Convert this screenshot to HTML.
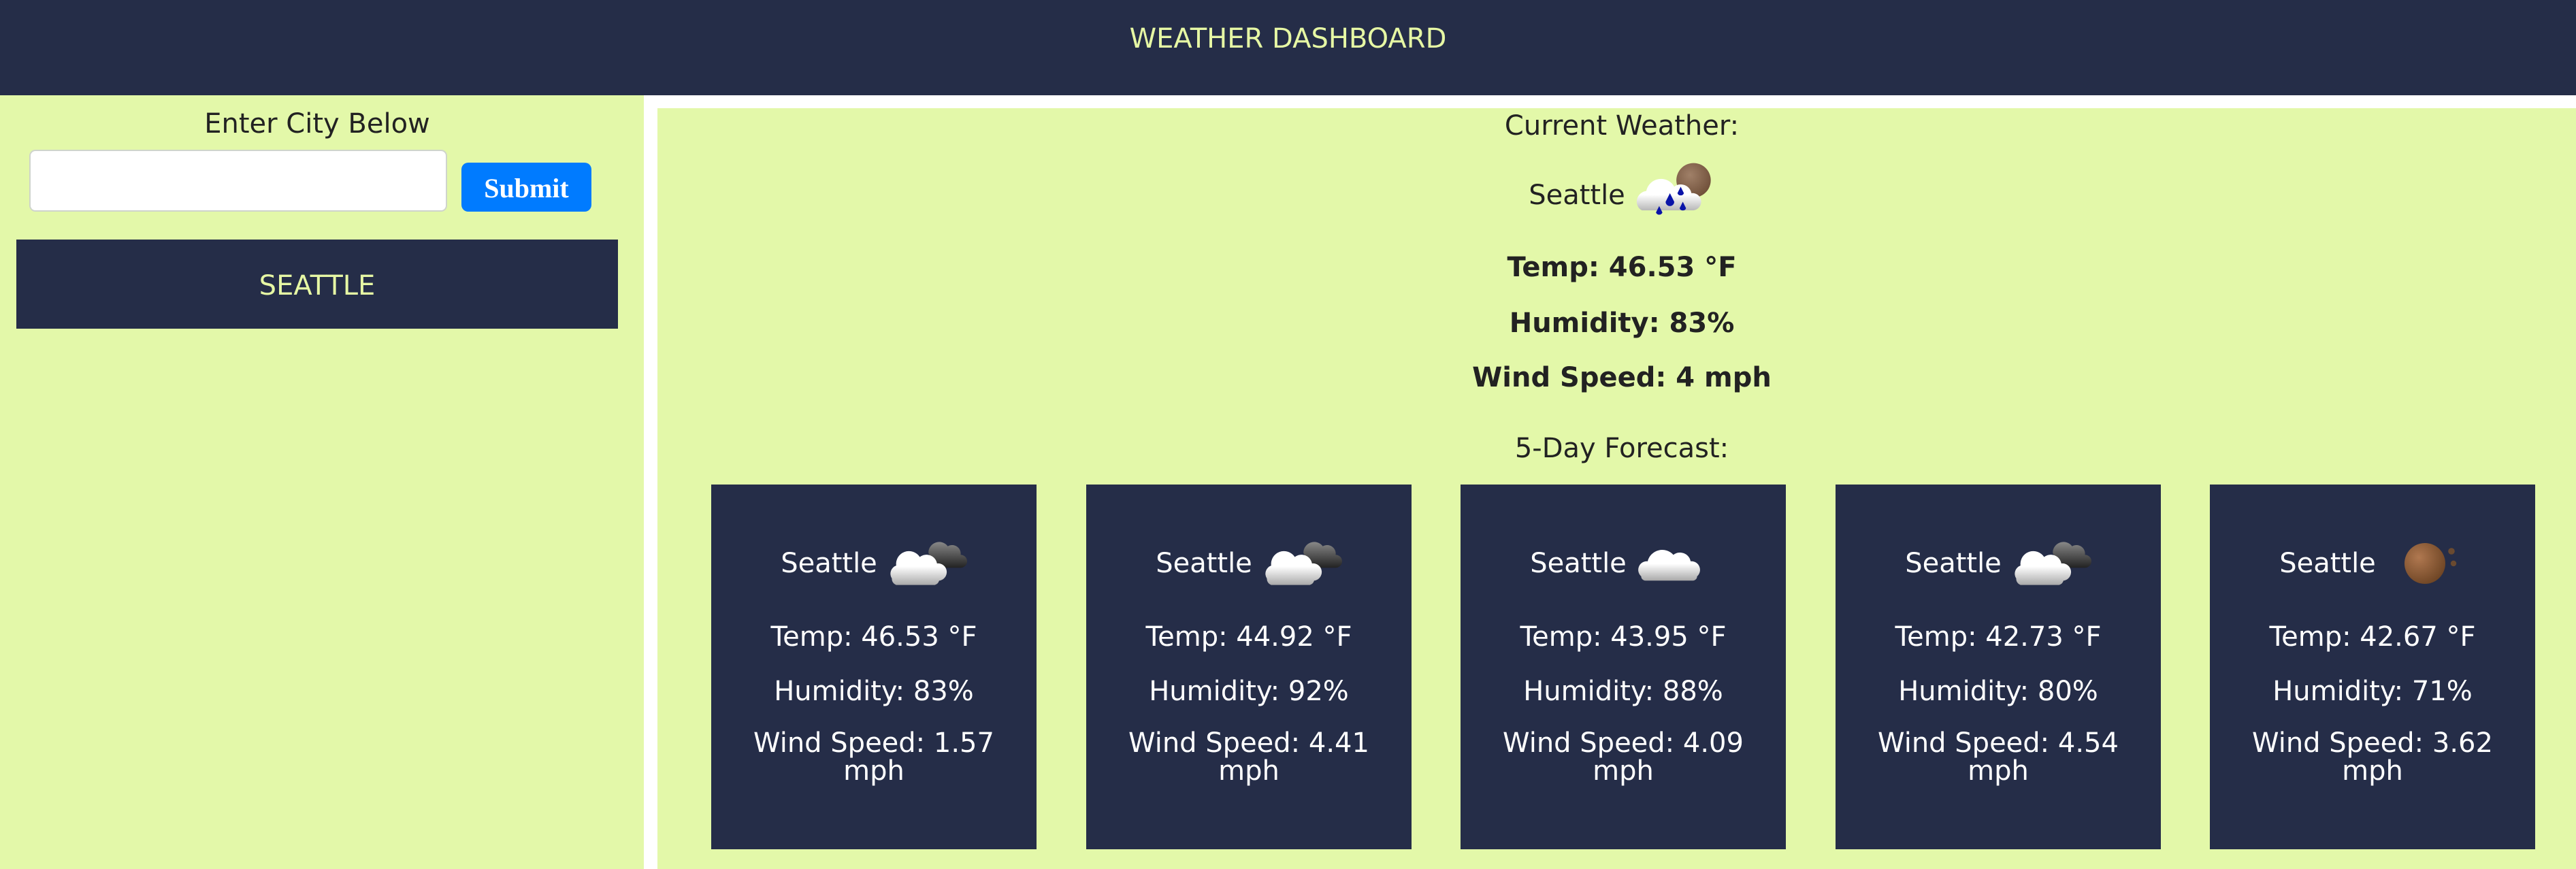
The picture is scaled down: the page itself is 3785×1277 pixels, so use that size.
<!DOCTYPE html>
<html><head><meta charset="utf-8"><style>
*{margin:0;padding:0;box-sizing:border-box}
body{width:3785px;height:1277px;position:relative;background:#fff;font-family:"DejaVu Sans","Liberation Sans",sans-serif;font-size:40px;color:#222;overflow:hidden}
.abs{position:absolute}
.hdr{left:0;top:0;width:3785px;height:140px;background:#252d48}
.c{position:absolute;text-align:center;line-height:48px;white-space:nowrap}
.green{background:#e3f8a9}
.card{position:absolute;top:712px;width:478px;height:536px;background:#252d48;color:#fff}
.card .c{left:0;width:478px}
.row{display:flex;justify-content:center;align-items:center}
.row svg{margin-left:12px}
</style></head><body>
<div class="abs hdr"></div>
<div class="c" style="left:0;width:3785px;top:33px;color:#e6f7a4">WEATHER DASHBOARD</div>

<div class="abs green" style="left:0;top:140px;width:946px;height:1137px"></div>
<div class="abs green" style="left:966px;top:159px;width:2819px;height:1118px"></div>

<div class="c" style="left:0;width:932px;top:158px">Enter City Below</div>
<div class="abs" style="left:43px;top:220px;width:614px;height:91px;background:#fff;border:2px solid #cfd4cc;border-radius:9px"></div>
<div class="abs" style="left:678px;top:239px;width:191px;height:72px;background:#007bff;border-radius:10px;color:#fff;font-family:'Liberation Serif',serif;font-weight:bold;font-size:40px;line-height:76px;text-align:center">Submit</div>
<div class="abs" style="left:24px;top:352px;width:884px;height:131px;background:#252d48"></div>
<div class="c" style="left:24px;width:884px;top:396px;color:#e6f7a4">SEATTLE</div>

<div class="c" style="left:966px;width:2834px;top:161px">Current Weather:</div>
<div class="c row" style="left:966px;width:2834px;top:227px;height:120px">
<span>Seattle</span>
<svg width="120" height="120" viewBox="4 7 38 38">
<defs><radialGradient id="mn" cx="0.4" cy="0.35" r="0.7"><stop offset="0" stop-color="#a08068"/><stop offset="1" stop-color="#6e4e38"/></radialGradient>
<linearGradient id="wc" x1="0" y1="0" x2="0" y2="1"><stop offset="0.5" stop-color="#fff"/><stop offset="1" stop-color="#b8b8b8"/></linearGradient></defs>
<circle cx="32" cy="19" r="8" fill="url(#mn)"/>
<path d="M6 31 a5 5 0 0 1 4-7 a7 7 0 0 1 13-2 a5 5 0 0 1 8 3 a4 4 0 0 1 1 8 h-24 a4 4 0 0 1-2-2z" fill="url(#wc)"/>
<path d="M21 25 l-2 4 a2 2 0 0 0 4 0z M26 22 l-1.5 3 a1.6 1.6 0 0 0 3 0z M27 29 l-1.5 3 a1.6 1.6 0 0 0 3 0z M16 31 l-1.5 3 a1.6 1.6 0 0 0 3 0z" fill="#0a14a8"/>
</svg></div>
<div class="c" style="left:966px;width:2834px;top:369px;font-weight:bold">Temp: 46.53 °F</div>
<div class="c" style="left:966px;width:2834px;top:451px;font-weight:bold">Humidity: 83%</div>
<div class="c" style="left:966px;width:2834px;top:531px;font-weight:bold">Wind Speed: 4 mph</div>
<div class="c" style="left:966px;width:2834px;top:635px">5-Day Forecast:</div>

<svg width="0" height="0" style="position:absolute"><defs>
<linearGradient id="w2" x1="0" y1="0" x2="0" y2="1"><stop offset="0.45" stop-color="#fff"/><stop offset="1" stop-color="#a9a9a9"/></linearGradient>
<linearGradient id="d2" x1="0" y1="0" x2="0" y2="1"><stop offset="0" stop-color="#888"/><stop offset="1" stop-color="#222"/></linearGradient>
<radialGradient id="m2" cx="0.35" cy="0.35" r="0.75"><stop offset="0" stop-color="#b07850"/><stop offset="1" stop-color="#6a4222"/></radialGradient>
<symbol id="bc" viewBox="4 8 38 38"><path d="M24 22 a5 5 0 0 1 9-3 a4 4 0 0 1 6 4 a3 3 0 0 1 0 6 h-12z" fill="url(#d2)"/><path d="M7 34 a4 4 0 0 1 2-6 a6 6 0 0 1 11-4 a5 5 0 0 1 8 3 a4 4 0 0 1 1 8 a3 3 0 0 1-2 2 h-18 a3 3 0 0 1-2-3z" fill="url(#w2)"/></symbol>
<symbol id="cl" viewBox="4 8 38 38"><path d="M7 33 a4 4 0 0 1 3-7 a7 7 0 0 1 12-3 a5 5 0 0 1 8 3 a4 4 0 0 1 3 7 a2 2 0 0 1-2 2 h-22 a2 2 0 0 1-2-2z" fill="url(#w2)"/></symbol>
<symbol id="mo" viewBox="4 6 40 40"><circle cx="24" cy="26" r="10" fill="url(#m2)"/><circle cx="37" cy="20" r="1.6" fill="#6a4a30"/><circle cx="38" cy="26" r="1.4" fill="#6a4a30"/></symbol>
</defs></svg>

<div class="card" style="left:1045px">
<div class="c row" style="top:56px;height:120px"><span>Seattle</span><svg width="120" height="120"><use href="#bc"/></svg></div>
<div class="c" style="top:200px">Temp: 46.53 °F</div>
<div class="c" style="top:280px">Humidity: 83%</div>
<div class="c" style="top:360px;line-height:41px">Wind Speed: 1.57<br>mph</div>
</div>
<div class="card" style="left:1596px">
<div class="c row" style="top:56px;height:120px"><span>Seattle</span><svg width="120" height="120"><use href="#bc"/></svg></div>
<div class="c" style="top:200px">Temp: 44.92 °F</div>
<div class="c" style="top:280px">Humidity: 92%</div>
<div class="c" style="top:360px;line-height:41px">Wind Speed: 4.41<br>mph</div>
</div>
<div class="card" style="left:2146px">
<div class="c row" style="top:56px;height:120px"><span>Seattle</span><svg width="120" height="120"><use href="#cl"/></svg></div>
<div class="c" style="top:200px">Temp: 43.95 °F</div>
<div class="c" style="top:280px">Humidity: 88%</div>
<div class="c" style="top:360px;line-height:41px">Wind Speed: 4.09<br>mph</div>
</div>
<div class="card" style="left:2697px">
<div class="c row" style="top:56px;height:120px"><span>Seattle</span><svg width="120" height="120"><use href="#bc"/></svg></div>
<div class="c" style="top:200px">Temp: 42.73 °F</div>
<div class="c" style="top:280px">Humidity: 80%</div>
<div class="c" style="top:360px;line-height:41px">Wind Speed: 4.54<br>mph</div>
</div>
<div class="card" style="left:3247px">
<div class="c row" style="top:56px;height:120px"><span>Seattle</span><svg width="120" height="120"><use href="#mo"/></svg></div>
<div class="c" style="top:200px">Temp: 42.67 °F</div>
<div class="c" style="top:280px">Humidity: 71%</div>
<div class="c" style="top:360px;line-height:41px">Wind Speed: 3.62<br>mph</div>
</div>
</body></html>
